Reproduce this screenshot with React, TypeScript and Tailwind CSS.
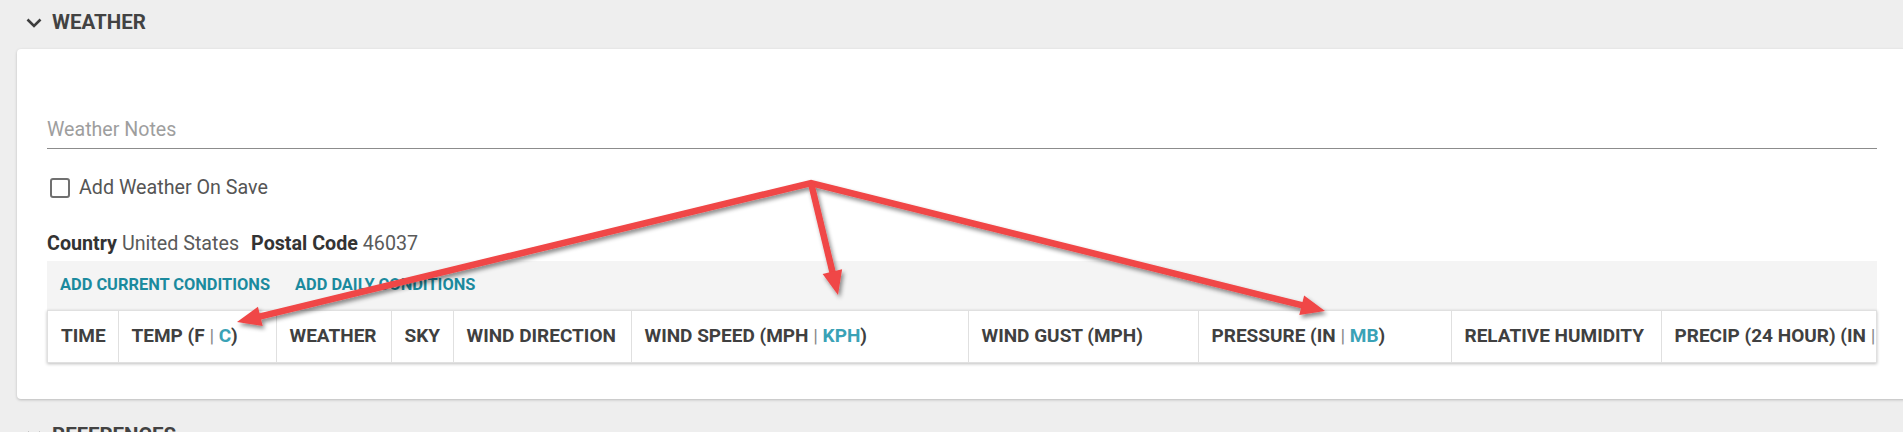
import React from "react";

type Column = {
  label: string;
  unit?: string;
  width: string;
};

const COLUMNS: Column[] = [
  { label: "TIME", width: "w-[70px]" },
  { label: "TEMP (F", unit: "C", width: "w-[158px]" },
  { label: "WEATHER", width: "w-[115px]" },
  { label: "SKY", width: "w-[62px]" },
  { label: "WIND DIRECTION", width: "w-[178px]" },
  { label: "WIND SPEED (MPH", unit: "KPH", width: "w-[337px]" },
  { label: "WIND GUST (MPH)", width: "w-[230px]" },
  { label: "PRESSURE (IN", unit: "MB", width: "w-[253px]" },
  { label: "RELATIVE HUMIDITY", width: "w-[210px]" },
  { label: "PRECIP (24 HOUR) (IN", unit: "CM", width: "w-[300px]" },
];

// annotation arrows drawn over the screenshot
const APEX = { x: 811, y: 183 };
const TIPS = [
  { x: 237, y: 322 },
  { x: 838, y: 295 },
  { x: 1325, y: 311 },
];

function headFor(from: { x: number; y: number }, to: { x: number; y: number }) {
  const dx = to.x - from.x;
  const dy = to.y - from.y;
  const len = Math.hypot(dx, dy);
  const ux = dx / len;
  const uy = dy / len;
  const head = 24;
  const half = 10;
  const bx = to.x - ux * head;
  const by = to.y - uy * head;
  return {
    base: { x: bx + ux * 3, y: by + uy * 3 },
    points: `${to.x},${to.y} ${bx - uy * half},${by + ux * half} ${bx + uy * half},${by - ux * half}`,
  };
}

function Arrows() {
  const heads = TIPS.map((t) => headFor(APEX, t));
  return (
    <svg
      className="absolute top-0 left-0 pointer-events-none"
      width={1903}
      height={432}
      viewBox="0 0 1903 432"
    >
      <defs>
        <filter id="arrowShadow" x="-10%" y="-10%" width="120%" height="130%">
          <feDropShadow dx="2" dy="3" stdDeviation="2" floodColor="#000" floodOpacity="0.45" />
        </filter>
      </defs>
      <g filter="url(#arrowShadow)" fill="#f04646" stroke="#f04646">
        <path
          d={`M${heads[0].base.x} ${heads[0].base.y} L${APEX.x} ${APEX.y} L${heads[2].base.x} ${heads[2].base.y}`}
          fill="none"
          strokeWidth={6.5}
          strokeLinejoin="miter"
        />
        <line
          x1={APEX.x}
          y1={APEX.y}
          x2={heads[1].base.x}
          y2={heads[1].base.y}
          strokeWidth={6.5}
        />
        {heads.map((h, i) => (
          <polygon key={i} points={h.points} stroke="none" />
        ))}
      </g>
    </svg>
  );
}

function Chevron() {
  return (
    <svg width="16" height="10" viewBox="0 0 16 10" className="shrink-0">
      <polyline
        points="1.5,1.5 8,8 14.5,1.5"
        fill="none"
        stroke="#3d3d3d"
        strokeWidth="2.6"
      />
    </svg>
  );
}

function SectionHeader({ title }: { title: string }) {
  return (
    <div className="h-[45px] flex items-center gap-[10px] pl-[26px]">
      <Chevron />
      <span className="text-[20.5px] font-bold text-[#424242] leading-none">{title}</span>
    </div>
  );
}

function HeaderCell({ col }: { col: Column }) {
  return (
    <th className="h-[51px] px-[13px] text-left align-middle text-[19px] font-bold text-[#404040] whitespace-nowrap border-r border-[#e0e0e0] overflow-hidden">
      {col.label}
      {col.unit && (
        <>
          {" "}
          <span className="font-normal text-[#8a8a8a]">|</span>{" "}
          <span className="text-[#3aa2b6]">{col.unit}</span>)
        </>
      )}
    </th>
  );
}

export default function App() {
  return (
    <div className="relative w-[1903px] h-[432px] overflow-hidden bg-[#eeeeee] font-['Roboto',sans-serif]">
      <SectionHeader title="WEATHER" />

      <div className="ml-[17px] mr-[-4px] mt-[4px] mb-[14px] bg-white rounded-[4px] shadow-[0_1px_3px_rgba(0,0,0,0.22)] pl-[30px] pr-[30px] pt-[70px] pb-[36px]">
        {/* notes input */}
        <div className="border-b border-[#8c8c8c] pb-[7px]">
          <div className="h-[22px] leading-[22px] text-[19.6px] text-[#9e9e9e]">Weather Notes</div>
        </div>

        <label className="mt-[28px] flex items-center gap-[9px] pl-[3px]">
          <span className="w-[20px] h-[20px] rounded-[3px] border-2 border-[#707070]" />
          <span className="text-[19.7px] leading-[22px] text-[#555555]">Add Weather On Save</span>
        </label>

        <div className="mt-[34px] h-[22px] leading-[22px] text-[19.7px] text-[#5a5a5a]">
          <span className="font-bold text-[#333333]">Country</span> United States
          <span className="ml-[12px] font-bold text-[#333333]">Postal Code</span> 46037
        </div>

        <div className="mt-[6px]">
          <div className="h-[49px] bg-[#f4f4f4] flex items-center gap-[25px] pl-[13px]">
            <button className="text-[16.4px] font-bold text-[#1b8a9e]">
              ADD CURRENT CONDITIONS
            </button>
            <button className="text-[16.4px] font-bold text-[#1b8a9e]">
              ADD DAILY CONDITIONS
            </button>
          </div>
          <div className="overflow-hidden border border-[#e0e0e0] shadow-[0_1px_3px_rgba(0,0,0,0.25)]">
            <table className="table-fixed border-collapse w-[1913px]">
              <colgroup>
                {COLUMNS.map((c) => (
                  <col key={c.label} className={c.width} />
                ))}
              </colgroup>
              <thead>
                <tr>
                  {COLUMNS.map((c) => (
                    <HeaderCell key={c.label} col={c} />
                  ))}
                </tr>
              </thead>
            </table>
          </div>
        </div>
      </div>

      <SectionHeader title="REFERENCES" />

      <Arrows />
    </div>
  );
}
